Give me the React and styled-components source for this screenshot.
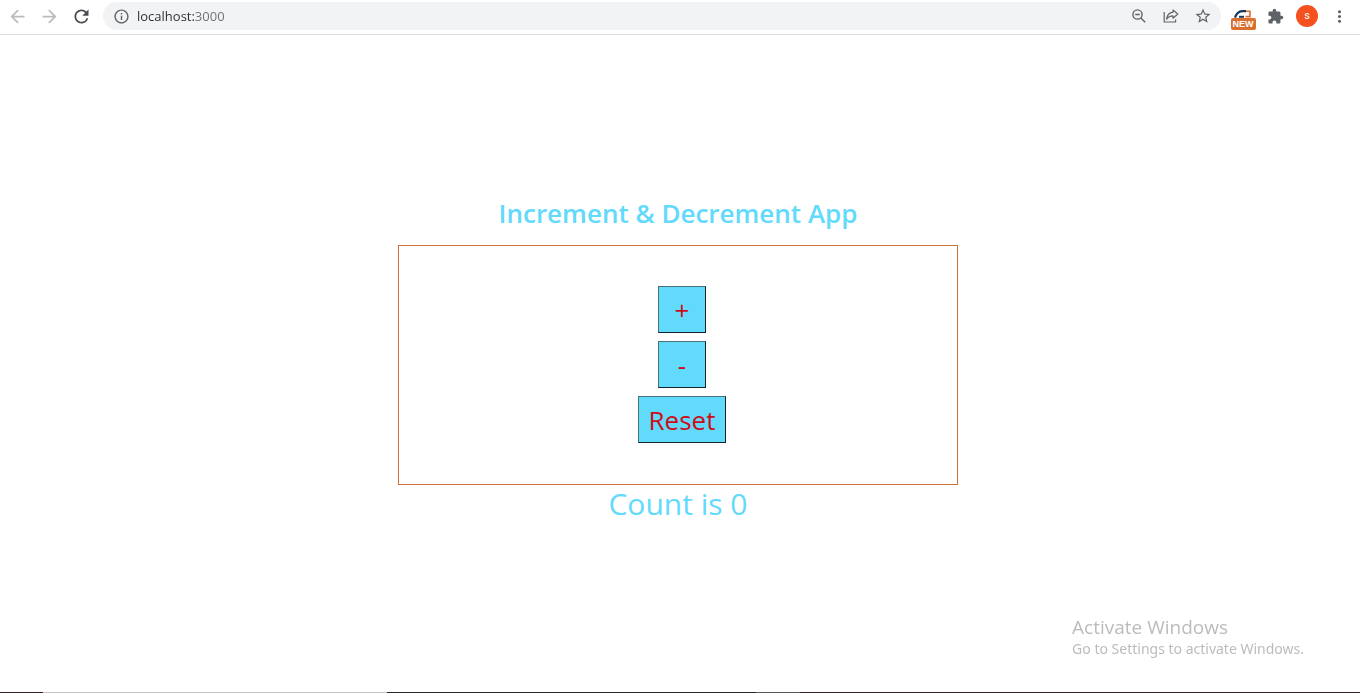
import React, { useState } from "react";
import styled, { createGlobalStyle } from "styled-components";
import {
  MdArrowBack,
  MdArrowForward,
  MdRefresh,
  MdInfoOutline,
  MdStarBorder,
  MdExtension,
  MdMoreVert,
} from "react-icons/md";

const GlobalStyle = createGlobalStyle`
  * { box-sizing: border-box; }
  body {
    margin: 0;
    background: #fff;
    font-family: "Open Sans", "Noto Sans", sans-serif;
  }
`;

const Screen = styled.div`
  display: flex;
  flex-direction: column;
  min-height: 100vh;
`;

const Toolbar = styled.header`
  display: flex;
  align-items: center;
  height: 35px;
  padding: 0 10px 2px 6px;
  border-bottom: 1px solid #dcdde0;
`;

const IconButton = styled.button`
  display: flex;
  align-items: center;
  justify-content: center;
  flex: none;
  width: ${(p) => p.$width || 32}px;
  height: 28px;
  padding: 0;
  border: 0;
  background: none;
  color: ${(p) => p.$color || "#5f6368"};
`;

const AddressBar = styled.div`
  display: flex;
  align-items: center;
  flex: 1;
  height: 28px;
  margin: 0 6px 0 11px;
  padding: 0 2px;
  border-radius: 14px;
  background: #f1f3f4;
`;

const AddressInput = styled.input`
  flex: 1;
  min-width: 0;
  height: 20px;
  padding: 0;
  border: 0;
  outline: 0;
  font: 13px/20px "Open Sans", "Noto Sans", sans-serif;
  color: transparent;
  caret-color: #2b2d30;
  background: linear-gradient(90deg, #2b2d30 58px, #6b6f74 58px);
  background-clip: text;
  -webkit-background-clip: text;
`;

const ExtensionButton = styled(IconButton)`
  flex-direction: column;
  justify-content: flex-end;
`;

const NewTag = styled.span`
  padding: 0 2px;
  border-radius: 2px;
  background: #d9702f;
  color: #fff;
  font: 700 9px/12px "Liberation Sans", sans-serif;
`;

const Avatar = styled.button`
  flex: none;
  width: 22px;
  height: 22px;
  margin: 0 11px 0 5px;
  padding: 0;
  border: 0;
  border-radius: 50%;
  background: #f4511e;
  color: #fff;
  font: 11px/22px Roboto, sans-serif;
`;

const Main = styled.main`
  display: flex;
  flex: 1;
  flex-direction: column;
  align-items: center;
  justify-content: center;
  padding: 0 4px 7px 0;
  color: #61dafb;
`;

const Title = styled.h1`
  margin: 0 0 16px;
  color: #61dafb;
  font-size: 26px;
  font-weight: 600;
  line-height: 32px;
`;

const Panel = styled.section`
  display: flex;
  flex-direction: column;
  align-items: center;
  gap: 8px;
  width: 100%;
  max-width: 560px;
  padding: 40px 0 41px 8px;
  border: 1px solid #d2703c;
`;

const CounterButton = styled.button`
  min-width: 48px;
  height: 47px;
  padding: 1px 10px 0;
  border: 1px solid;
  border-color: #4c6f7a #10242b #10242b #4c6f7a;
  background: #61dafb;
  color: #cc0d18;
  font: 26px/40px "Open Sans", "Noto Sans", sans-serif;
`;

const Count = styled.output`
  font-size: 30px;
  line-height: 38px;
`;

const Watermark = styled.aside`
  position: fixed;
  right: 56px;
  bottom: 34px;
  color: #bcbcbc;
  pointer-events: none;
`;

const WatermarkTitle = styled.p`
  margin: 0;
  font-size: 19px;
  line-height: 24px;
`;

const WatermarkText = styled.p`
  margin: 0;
  font-family: "Noto Sans", sans-serif;
  font-size: 14px;
  line-height: 20px;
`;

const TaskbarEdge = styled.div`
  height: 1px;
  background: linear-gradient(
    90deg,
    #37202b 43px,
    #c4c4c4 43px 387px,
    #2b2429 387px 756px,
    #5a5658 756px 800px,
    #37202b 800px
  );
`;

function ZoomOutIcon() {
  return (
    <svg width="14" height="14" viewBox="0 0 14 14" fill="none" stroke="currentColor" strokeWidth="1.4" aria-hidden="true">
      <circle cx="5.5" cy="5.5" r="4.6" />
      <path d="M3.2 5.5H7.8M8.9 8.9L13.2 13.2" />
    </svg>
  );
}

function ShareIcon() {
  return (
    <svg width="16" height="16" viewBox="0 0 16 16" fill="none" stroke="currentColor" strokeWidth="1.2" strokeLinejoin="round" aria-hidden="true">
      <path d="M1.2 4V14H12.6V11.5" />
      <path d="M10 2L14.8 6L10 10.2V7.9C7 7.9 5 9 3.6 11.2C4 7.3 6.2 4.6 10 4.1Z" />
    </svg>
  );
}

function ExtensionLogo() {
  return (
    <svg width="18" height="8" viewBox="0 0 18 8" fill="none" aria-hidden="true">
      <path d="M1 7.5C2.5 3.5 4.5 1.4 8 1.2H12" stroke="#17375e" strokeWidth="2.2" />
      <path d="M5 6.8H10" stroke="#17375e" strokeWidth="2" />
      <path d="M12 1.2H16V6.6H11.5" stroke="#d9702f" strokeWidth="1.6" />
    </svg>
  );
}

export default function App() {
  const [count, setCount] = useState(0);
  const [address, setAddress] = useState("localhost:3000");

  return (
    <Screen>
      <GlobalStyle />
      <Toolbar>
        <IconButton $width={22} $color="#b9bbbe" aria-label="Back"><MdArrowBack size={21} /></IconButton>
        <IconButton $width={42} $color="#b9bbbe" aria-label="Forward"><MdArrowForward size={21} /></IconButton>
        <IconButton $width={22} $color="#494c50" aria-label="Reload"><MdRefresh size={21} /></IconButton>
        <AddressBar>
          <IconButton aria-label="Site information"><MdInfoOutline size={17} /></IconButton>
          <AddressInput
            aria-label="Address"
            spellCheck={false}
            value={address}
            onChange={(event) => setAddress(event.target.value)}
          />
          <IconButton aria-label="Zoom"><ZoomOutIcon /></IconButton>
          <IconButton aria-label="Share"><ShareIcon /></IconButton>
          <IconButton aria-label="Bookmark"><MdStarBorder size={18} /></IconButton>
        </AddressBar>
        <ExtensionButton aria-label="Extension">
          <ExtensionLogo />
          <NewTag>NEW</NewTag>
        </ExtensionButton>
        <IconButton aria-label="Extensions"><MdExtension size={17} /></IconButton>
        <Avatar aria-label="Profile">s</Avatar>
        <IconButton $width={21} aria-label="Menu"><MdMoreVert size={19} /></IconButton>
      </Toolbar>
      <Main>
        <Title>Increment &amp; Decrement App</Title>
        <Panel>
          <CounterButton onClick={() => setCount(count + 1)}>+</CounterButton>
          <CounterButton onClick={() => setCount(count - 1)}>-</CounterButton>
          <CounterButton onClick={() => setCount(0)}>Reset</CounterButton>
        </Panel>
        <Count>Count is {count}</Count>
      </Main>
      <Watermark>
        <WatermarkTitle>Activate Windows</WatermarkTitle>
        <WatermarkText>Go to Settings to activate Windows.</WatermarkText>
      </Watermark>
      <TaskbarEdge />
    </Screen>
  );
}
